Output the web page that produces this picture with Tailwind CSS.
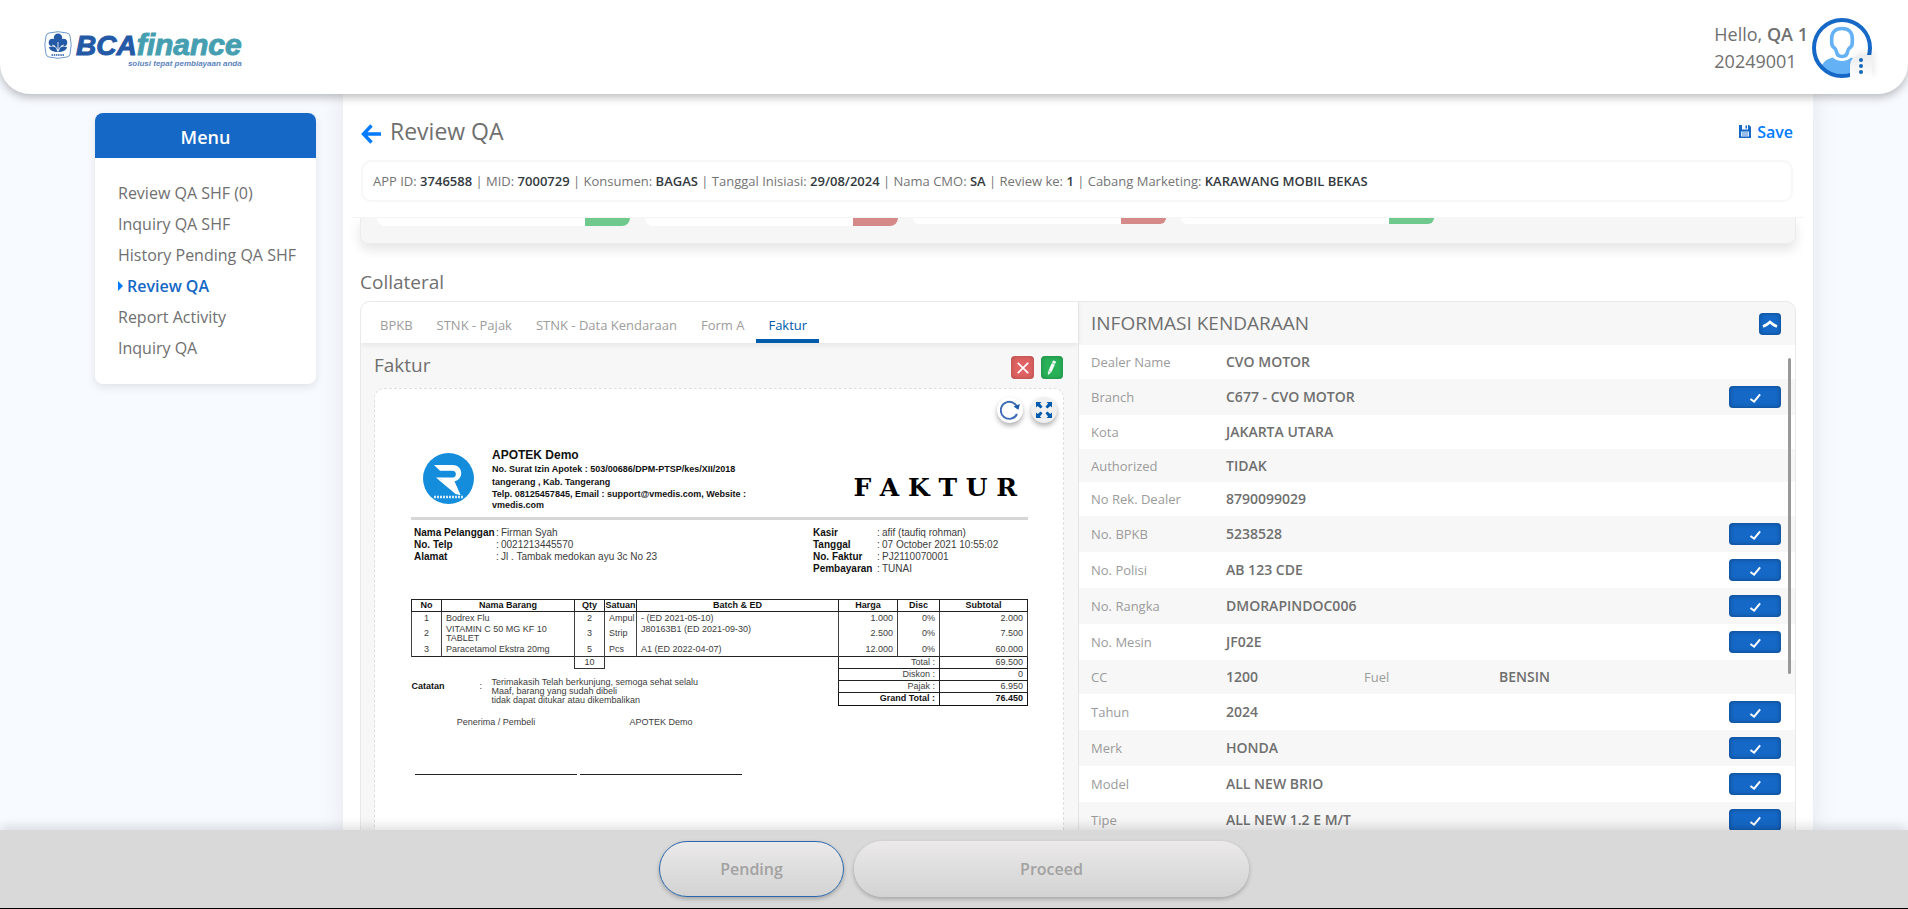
<!DOCTYPE html>
<html lang="id">
<head>
<meta charset="utf-8">
<title>Review QA</title>
<meta name="viewport" content="width=device-width, initial-scale=1">
<script src="https://cdn.jsdelivr.net/npm/@tailwindcss/browser@4"></script>
</head>
<body class="flex h-screen flex-col overflow-hidden bg-[#f7faff] font-['Open_Sans',sans-serif] text-[#6f6f6f]">

<svg class="hidden" aria-hidden="true">
  <symbol id="check" viewBox="0 0 14 12"><path d="M1.5 6.5 5.5 9.5 12 1.5" fill="none" stroke="#fff" stroke-width="2.2"/></symbol>
</svg>

<header class="relative z-20 flex h-[94px] shrink-0 items-center justify-between rounded-b-[30px] bg-white pr-9 pl-11 shadow-[0_3px_10px_rgba(0,0,0,0.28)]">
  <a href="#" class="flex items-start gap-1 pt-1" aria-label="BCA finance">
    <svg class="h-7 w-7" viewBox="0 0 28 28">
      <path d="M5 2Q14-.6 23 2 25.6 2.400 26 5 28.400 14 26 23 25.600 25.600 23 26 14 28.600 5 26 2.400 25.600 2 23-.4 14 2 5 2.400 2.400 5 2Z" fill="#fff" stroke="#6f9acb" stroke-width="1"/>
      <circle cx="14" cy="6.800" r="4.200" fill="#2459a6"/><circle cx="8.500" cy="11.500" r="3.800" fill="#2459a6"/><circle cx="19.500" cy="11.500" r="3.800" fill="#2459a6"/>
      <path d="M11 8h6v10h-6Z" fill="#2459a6"/>
      <path d="M5 16c4-1.500 7.500 0 9 3 1.500-3 5-4.500 9-3-.5 3.500-4 5-9 5s-8.500-1.500-9-5Z" fill="#2459a6"/>
      <path d="M14 11v10M8 14c3 .5 5 3 5.500 6M20 14c-3 .5-5 3-5.500 6" stroke="#fff" stroke-width=".8" fill="none"/>
      <path d="M7.500 24h13" stroke="#2459a6" stroke-width="1.500" stroke-dasharray="1.500 .7"/>
    </svg>
    <span class="flex flex-col items-end font-['Liberation_Sans',sans-serif] italic">
      <span class="flex items-baseline leading-7 font-bold"><span class="text-[28px] text-[#2459a6] [-webkit-text-stroke:1px_#2459a6]">BCA</span><span class="text-[30px] text-[#469fb0] [-webkit-text-stroke:1px_#469fb0]">finance</span></span>
      <span class="text-[8px] leading-[8px] font-bold text-[#5b84bd]">solusi tepat pembiayaan anda</span>
    </span>
  </a>
  <div class="flex items-center gap-1 pt-px">
    <p class="text-[18px] leading-[27px]">Hello, <span class="font-semibold">QA 1</span><br>20249001</p>
    <button class="relative h-[60px] w-[60px]" aria-label="Profil">
      <svg class="h-[60px] w-[60px]" viewBox="0 0 60 60">
        <clipPath id="face"><circle cx="30" cy="30" r="27"/></clipPath>
        <circle cx="30" cy="30" r="28" fill="#fff"/>
        <path clip-path="url(#face)" d="M7 60C8 46 13 41 21 39.500 25 44 35 44 39 39.500 47 41 52 46 53 60Z" fill="#64b1f5"/>
        <path d="M30 10.500c-7 0-10.300 4-10.300 10v4c0 2.600.8 4.200 2.500 5.300 1.500 1 2 2.200 2.300 4 .4 2.800 2.500 4.700 5.500 4.700s5.100-1.900 5.500-4.700c.3-1.800.8-3 2.300-4 1.700-1.100 2.500-2.700 2.500-5.300v-4c0-6-3.300-10-10.300-10Z" fill="#fff" stroke="#64b1f5" stroke-width="3.600"/>
        <circle cx="30" cy="30" r="28" fill="none" stroke="#1568c6" stroke-width="4"/>
      </svg>
      <span class="absolute right-0 bottom-0 flex h-[23px] w-[22px] flex-col items-center justify-center gap-[2px] rounded-tl-[10px] bg-gradient-to-b from-[#ececec] to-white shadow-[3px_-3px_6px_rgba(0,0,0,0.08)]">
        <i class="h-[4px] w-[4px] rounded-full bg-[#1568b8]"></i><i class="h-[4px] w-[4px] rounded-full bg-[#1568b8]"></i><i class="h-[4px] w-[4px] rounded-full bg-[#1568b8]"></i>
      </span>
    </button>
  </div>
</header>

<div class="flex min-h-0 flex-1 items-start gap-[27px] overflow-hidden px-[95px]">
  <nav class="mt-[19px] w-[221px] shrink-0 overflow-hidden rounded-lg bg-white shadow-[0_3px_10px_rgba(0,0,0,0.1)]">
    <h2 class="bg-[#1568c6] pt-1 text-center text-[18px] leading-[41px] font-semibold text-white">Menu</h2>
    <ul class="flex flex-col gap-[7px] px-[23px] pt-[23px] pb-6 text-[16px] leading-6">
      <li><a href="#">Review QA SHF (0)</a></li>
      <li><a href="#">Inquiry QA SHF</a></li>
      <li><a href="#" class="whitespace-nowrap">History Pending QA SHF</a></li>
      <li><a href="#" class="flex items-center gap-1 font-semibold text-[#1568c6]"><svg class="h-[10px] w-[5px]" viewBox="0 0 5 10"><path d="M0 0 5 5 0 10Z" fill="#007bff"/></svg>Review QA</a></li>
      <li><a href="#">Report Activity</a></li>
      <li><a href="#">Inquiry QA</a></li>
    </ul>
  </nav>

  <main class="min-w-0 flex-1 self-stretch bg-white shadow-[0_0_24px_rgba(0,0,0,0.09)]">
    <div class="relative z-10 mx-[9px] border-b border-[#f5f5f5] bg-white pr-[11px] pb-[15px] pl-[9px]">
      <div class="flex h-[66px] items-center justify-between pt-[9px]">
        <h1 class="flex items-center gap-[9px] text-[23px] font-medium">
          <a href="#" aria-label="Kembali"><svg class="mt-1 h-5 w-5" viewBox="0 0 20 20"><path d="M10.500 1.500 2.500 10l8 8.500M3 10h17" fill="none" stroke="#007bff" stroke-width="3.400"/></svg></a>Review QA
        </h1>
        <button class="flex items-center gap-[6px] text-[16px] font-semibold text-[#007bff]">
          <svg class="h-[13px] w-3" viewBox="0 0 12 13"><path d="M0 0h10l2 2v11H0Z" fill="#1568c6"/><path d="M3 0h6v4.500H3Z" fill="#fff"/><path d="M6.500.6h1.500v3H6.500Z" fill="#1568c6"/><path d="M2 6.500h8v5H2Z" fill="#d7e6f7"/><path d="M3 8h6M3 10h6" stroke="#5c96d8"/></svg>Save
        </button>
      </div>
      <p class="rounded-[10px] border-2 border-[#f7f7f7] px-[10px] py-[9px] text-[13px] leading-5 text-[#747474] [&>b]:font-semibold [&>b]:text-[#343a40]">APP ID: <b>3746588</b> | MID: <b>7000729</b> | Konsumen: <b>BAGAS</b> | Tanggal Inisiasi: <b>29/08/2024</b> | Nama CMO: <b>SA</b> | Review ke: <b>1</b> | Cabang Marketing: <b>KARAWANG MOBIL BEKAS</b></p>
    </div>

    <section class="mx-[17px] flex items-start gap-[15px] rounded-b-lg border border-t-0 border-[#ececec] bg-[#f6f6f6] px-4 pb-[17px] shadow-[0_6px_12px_rgba(0,0,0,0.1)]">
      <div class="flex h-2 w-[253px] justify-end overflow-hidden rounded-b-lg bg-white"><i class="w-[45px] bg-[#6fc98c]"></i></div>
      <div class="flex h-2 w-[253px] justify-end overflow-hidden rounded-b-lg bg-white"><i class="w-[45px] bg-[#d48a89]"></i></div>
      <div class="flex h-[6px] w-[253px] justify-end overflow-hidden rounded-b-lg bg-white"><i class="w-[45px] bg-[#d48a89]"></i></div>
      <div class="flex h-[6px] w-[253px] justify-end overflow-hidden rounded-b-lg bg-white"><i class="w-[45px] bg-[#6fc98c]"></i></div>
    </section>

    <h2 class="mt-6 ml-[17px] text-[19px] leading-7">Collateral</h2>

    <section class="mx-[17px] mt-[5px] flex items-stretch overflow-hidden rounded-t-[10px] border border-[#e9e9e9] bg-[#f7f7f7]">
      <div class="min-w-0 flex-1">
        <div role="tablist" class="relative flex h-[41px] items-end bg-white pl-[7px] text-[13px] text-[#9c9c9c] shadow-[0_2px_6px_rgba(0,0,0,0.08)]">
          <button role="tab" class="h-[35px] border-b-4 border-transparent px-3 pt-1">BPKB</button>
          <button role="tab" class="h-[35px] border-b-4 border-transparent px-3 pt-1">STNK - Pajak</button>
          <button role="tab" class="h-[35px] border-b-4 border-transparent px-3 pt-1">STNK - Data Kendaraan</button>
          <button role="tab" class="h-[35px] border-b-4 border-transparent px-3 pt-1">Form A</button>
          <button role="tab" aria-selected="true" class="h-[35px] border-b-4 border-[#005bac] px-3 pt-1 font-medium text-[#005bac]">Faktur</button>
        </div>
        <div class="flex h-[45px] items-center justify-between pr-[15px] pl-[13px]">
          <h3 class="text-[19px]">Faktur</h3>
          <div class="mt-1 flex gap-[7px]">
            <button aria-label="Tolak" class="flex h-[23px] w-[23px] items-center justify-center rounded bg-[#e06262] shadow-[inset_0_0_5px_rgba(0,0,0,0.25)]"><svg class="h-3 w-3" viewBox="0 0 12 12"><path d="M.8.8 11.200 11.200M11.200.8.8 11.200" stroke="#fff" stroke-width="1.700"/></svg></button>
            <button aria-label="Ubah" class="flex h-[23px] w-[22px] items-center justify-center rounded bg-[#29b158] shadow-[inset_0_0_5px_rgba(0,0,0,0.25)]"><svg class="h-[15px] w-[10px]" viewBox="0 0 10 15"><path d="M6.200.8 8.800 1.800 8 3.600 5.400 2.600ZM4.900 3.600 7.500 4.700 4.300 11.800 1.800 10.700ZM1.400 11.600 3.700 12.600 1.300 14.500Z" fill="#fff" stroke="#fff" stroke-width=".6"/></svg></button>
          </div>
        </div>

        <div class="relative mr-[14px] ml-[13px] rounded-t-[10px] border border-dashed border-[#dedede] bg-white pt-[58px] pr-[35px] pb-14 pl-9 font-['Liberation_Sans',sans-serif] text-[9px] text-[#3c3c3c]">
          <div class="absolute top-2 right-[6px] flex gap-2">
            <button aria-label="Putar" class="flex h-[26px] w-[26px] items-center justify-center rounded-full bg-white shadow-[0_3px_5px_rgba(0,0,0,0.3)]"><svg class="h-5 w-5" viewBox="0 0 20 20"><path d="M17.500 8A8.500 8.500 0 1 0 17 14" fill="none" stroke="#3f6cb5" stroke-width="1.900"/><path d="M13.500 6.500 19.800 4 18.500 9.800Z" fill="#1d5bab"/></svg></button>
            <button aria-label="Layar penuh" class="flex h-[26px] w-[26px] items-center justify-center rounded-full bg-[#f0f0f0] shadow-[0_3px_5px_rgba(0,0,0,0.3)]"><svg class="h-4 w-4" viewBox="0 0 16 16"><path d="M0 0h5.500L3.900 1.600 6.500 4.700 4.700 6.500 1.600 3.900 0 5.500ZM16 0v5.500L14.400 3.900 11.300 6.500 9.500 4.700 12.100 1.600 10.500 0ZM0 16v-5.500L1.600 12.100 4.700 9.500 6.500 11.300 3.900 14.400 5.500 16ZM16 16h-5.500L12.100 14.400 9.500 11.300 11.300 9.500 14.400 12.100 16 10.500Z" fill="#005bac"/></svg></button>
          </div>

          <div class="flex items-start">
            <svg class="mt-[6px] ml-3 h-[51px] w-[51px] shrink-0" viewBox="0 0 51 51">
              <circle cx="25.500" cy="25.500" r="25.500" fill="#158ddd"/>
              <path d="M11 12h18.500c10.500 0 12 14 2 16.300L37.500 42h-3.500L13 24.500h17c4-.5 4-6.500-.5-6.800H17Z" fill="#fff"/>
              <path d="M22 28 36.500 42h-4.500L17 26Z" fill="#158ddd"/>
              <path d="M23 26.500 37.500 42l-5-1L15.500 26.500Z" fill="#fff"/>
              <path d="M11 44h29" stroke="#d6ecfa" stroke-width="2.500" stroke-dasharray="2 1"/>
            </svg>
            <div class="ml-[18px] w-[275px] font-bold text-[#111]">
              <p class="text-xs leading-4">APOTEK Demo</p>
              <p class="leading-[13px]">No. Surat Izin Apotek : 503/00686/DPM-PTSP/kes/XII/2018</p>
              <p class="leading-[13px]">tangerang , Kab. Tangerang</p>
              <p class="leading-[11px]">Telp. 08125457845, Email : support@vmedis.com, Website : vmedis.com</p>
            </div>
            <p class="mt-[25px] mr-[11px] ml-auto font-['DejaVu_Serif',serif] text-[25px] leading-8 font-bold text-black">F A K T U R</p>
          </div>
          <hr class="mt-[6px] border-t-[3px] border-[#d6d6d6]">

          <div class="mt-[7px] flex justify-between pl-[3px] text-[10px] leading-3 whitespace-nowrap">
            <div class="grid grid-cols-[82px_5px_auto] content-start">
              <b class="text-[#111]">Nama Pelanggan</b><span>:</span><span>Firman Syah</span>
              <b class="text-[#111]">No. Telp</b><span>:</span><span>0021213445570</span>
              <b class="text-[#111]">Alamat</b><span>:</span><span>Jl . Tambak medokan ayu 3c No 23</span>
            </div>
            <div class="grid w-[215px] grid-cols-[64px_5px_auto] content-start">
              <b class="text-[#111]">Kasir</b><span>:</span><span>afif (taufiq rohman)</span>
              <b class="text-[#111]">Tanggal</b><span>:</span><span>07 October 2021 10:55:02</span>
              <b class="text-[#111]">No. Faktur</b><span>:</span><span>PJ2110070001</span>
              <b class="text-[#111]">Pembayaran</b><span>:</span><span>TUNAI</span>
            </div>
          </div>

          <table class="mt-[24px] w-full table-fixed border-collapse leading-[9px]">
            <colgroup><col class="w-[30px]"><col class="w-[133px]"><col class="w-[30px]"><col class="w-[32px]"><col><col class="w-[59px]"><col class="w-[42px]"><col class="w-[88px]"></colgroup>
            <thead><tr class="h-3 border border-[#222] text-[#111] [&>th]:border-x [&>th]:border-[#222]">
              <th>No</th><th>Nama Barang</th><th>Qty</th><th>Satuan</th><th>Batch &amp; ED</th><th>Harga</th><th>Disc</th><th>Subtotal</th>
            </tr></thead>
            <tbody>
              <tr class="h-[13px] border-x border-[#222] [&>td]:border-x [&>td]:border-[#444]">
                <td class="text-center">1</td><td class="pl-1">Bodrex Flu</td><td class="text-center">2</td><td class="pl-1">Ampul</td><td class="pl-1">- (ED 2021-05-10)</td><td class="pr-1 text-right">1.000</td><td class="pr-1 text-right">0%</td><td class="pr-1 text-right">2.000</td></tr>
              <tr class="h-[18px] border-x border-[#222] [&>td]:border-x [&>td]:border-[#444]">
                <td class="text-center">2</td><td class="pl-1">VITAMIN C 50 MG KF 10<br>TABLET</td><td class="text-center">3</td><td class="pl-1">Strip</td><td class="pl-1 align-top">J80163B1 (ED 2021-09-30)</td><td class="pr-1 text-right">2.500</td><td class="pr-1 text-right">0%</td><td class="pr-1 text-right">7.500</td></tr>
              <tr class="h-[14px] border-x border-b border-[#222] [&>td]:border-x [&>td]:border-[#444]">
                <td class="text-center">3</td><td class="pl-1">Paracetamol Ekstra 20mg</td><td class="text-center">5</td><td class="pl-1">Pcs</td><td class="pl-1">A1 (ED 2022-04-07)</td><td class="pr-1 text-right">12.000</td><td class="pr-1 text-right">0%</td><td class="pr-1 text-right">60.000</td></tr>
              <tr class="h-3"><td colspan="2"></td><td class="border border-[#333] text-center">10</td><td colspan="2"></td><td colspan="2" class="border border-[#222] pr-1 text-right">Total :</td><td class="border border-[#222] pr-1 text-right">69.500</td></tr>
              <tr class="h-3"><td colspan="5" rowspan="3" class="pt-[9px] align-top">
                  <div class="grid grid-cols-[68px_12px_auto]"><b class="pt-1 text-[#111]">Catatan</b><span class="pt-1">:</span><p>Terimakasih Telah berkunjung, semoga sehat selalu<br>Maaf, barang yang sudah dibeli<br>tidak dapat ditukar atau dikembalikan</p></div>
                </td><td colspan="2" class="border border-[#222] pr-1 text-right">Diskon :</td><td class="border border-[#222] pr-1 text-right">0</td></tr>
              <tr class="h-3"><td colspan="2" class="border border-[#222] pr-1 text-right">Pajak :</td><td class="border border-[#222] pr-1 text-right">6.950</td></tr>
              <tr class="h-3 font-bold text-[#111]"><td colspan="2" class="border border-[#111] pr-1 text-right">Grand Total :</td><td class="border border-[#111] pr-1 text-right">76.450</td></tr>
            </tbody>
          </table>

          <div class="mt-[11px] flex gap-[3px] pl-1 text-center leading-[10px]">
            <p class="h-[58px] w-[162px] border-b border-[#222]">Penerima / Pembeli</p>
            <p class="h-[58px] w-[162px] border-b border-[#222]">APOTEK Demo</p>
          </div>
        </div>
      </div>

      <div class="relative w-1/2 shrink-0 border-l border-[#e4e4e4]">
        <div class="flex h-[43px] items-center justify-between pr-[14px] pl-3">
          <h3 class="text-[19px]">INFORMASI KENDARAAN</h3>
          <button aria-label="Tutup" class="flex h-[22px] w-[22px] items-center justify-center rounded bg-[#1568c6] shadow-[inset_0_0_4px_rgba(0,0,0,0.35)]"><svg class="h-2 w-4" viewBox="0 0 16 8"><path d="M1 6.500Q5 5 8 2 11 5 15 6.500" fill="none" stroke="#fff" stroke-width="2.600"/></svg></button>
        </div>
        <table class="w-full table-fixed border-collapse text-left text-[14px] leading-5 [&_th]:pl-3 [&_th]:text-[13px] [&_th]:font-normal [&_th]:text-[#9b9b9b] [&_td]:font-semibold [&_tr:nth-child(odd)]:bg-white [&_button]:float-right [&_button]:mr-[14px] [&_button]:flex [&_button]:h-[22px] [&_button]:w-[52px] [&_button]:items-center [&_button]:justify-center [&_button]:rounded [&_button]:bg-[#1568c6] [&_button]:pt-[3px] [&_button]:shadow-[inset_0_0_5px_rgba(0,0,0,0.35)] [&_svg]:h-[11px] [&_svg]:w-[13px]">
          <colgroup><col class="w-[147px]"><col class="w-[126px]"><col class="w-[147px]"><col><col class="w-[80px]"></colgroup>
          <tbody>
            <tr class="h-[34px]"><th>Dealer Name</th><td colspan="4">CVO MOTOR</td></tr>
            <tr class="h-9"><th>Branch</th><td colspan="3">C677 - CVO MOTOR</td><td><button aria-label="Cek Branch"><svg><use href="#check"/></svg></button></td></tr>
            <tr class="h-[34px]"><th>Kota</th><td colspan="4">JAKARTA UTARA</td></tr>
            <tr class="h-[33px]"><th>Authorized</th><td colspan="4">TIDAK</td></tr>
            <tr class="h-[34px]"><th>No Rek. Dealer</th><td colspan="4">8790099029</td></tr>
            <tr class="h-9"><th>No. BPKB</th><td colspan="3">5238528</td><td><button aria-label="Cek No. BPKB"><svg><use href="#check"/></svg></button></td></tr>
            <tr class="h-9"><th>No. Polisi</th><td colspan="3">AB 123 CDE</td><td><button aria-label="Cek No. Polisi"><svg><use href="#check"/></svg></button></td></tr>
            <tr class="h-9"><th>No. Rangka</th><td colspan="3">DMORAPINDOC006</td><td><button aria-label="Cek No. Rangka"><svg><use href="#check"/></svg></button></td></tr>
            <tr class="h-9"><th>No. Mesin</th><td colspan="3">JF02E</td><td><button aria-label="Cek No. Mesin"><svg><use href="#check"/></svg></button></td></tr>
            <tr class="h-[34px]"><th>CC</th><td>1200</td><th>Fuel</th><td colspan="2">BENSIN</td></tr>
            <tr class="h-9"><th>Tahun</th><td colspan="3">2024</td><td><button aria-label="Cek Tahun"><svg><use href="#check"/></svg></button></td></tr>
            <tr class="h-9"><th>Merk</th><td colspan="3">HONDA</td><td><button aria-label="Cek Merk"><svg><use href="#check"/></svg></button></td></tr>
            <tr class="h-9"><th>Model</th><td colspan="3">ALL NEW BRIO</td><td><button aria-label="Cek Model"><svg><use href="#check"/></svg></button></td></tr>
            <tr class="h-9"><th>Tipe</th><td colspan="3">ALL NEW 1.2 E M/T</td><td><button aria-label="Cek Tipe"><svg><use href="#check"/></svg></button></td></tr>
          </tbody>
        </table>
        <i class="absolute top-14 right-[4px] h-[316px] w-[3px] rounded bg-[#999]"></i>
      </div>
    </section>
  </main>
</div>

<footer class="relative z-20 flex h-[79px] shrink-0 items-center justify-center gap-[10px] border-b border-black bg-[#d9d9d9] pb-px text-[16px] font-semibold text-[#a2a2a2] shadow-[0_-4px_10px_rgba(0,0,0,0.12)]">
  <button class="h-14 w-[185px] rounded-full border border-[#2a67ad] bg-gradient-to-b from-[#ebe9e9] to-[#d3d3d3] shadow-[0_2px_4px_rgba(0,0,0,0.25)]">Pending</button>
  <button class="h-14 w-[395px] rounded-full bg-gradient-to-b from-[#ebe9e9] to-[#d3d3d3] shadow-[0_2px_4px_rgba(0,0,0,0.25)]">Proceed</button>
</footer>
</body>
</html>
